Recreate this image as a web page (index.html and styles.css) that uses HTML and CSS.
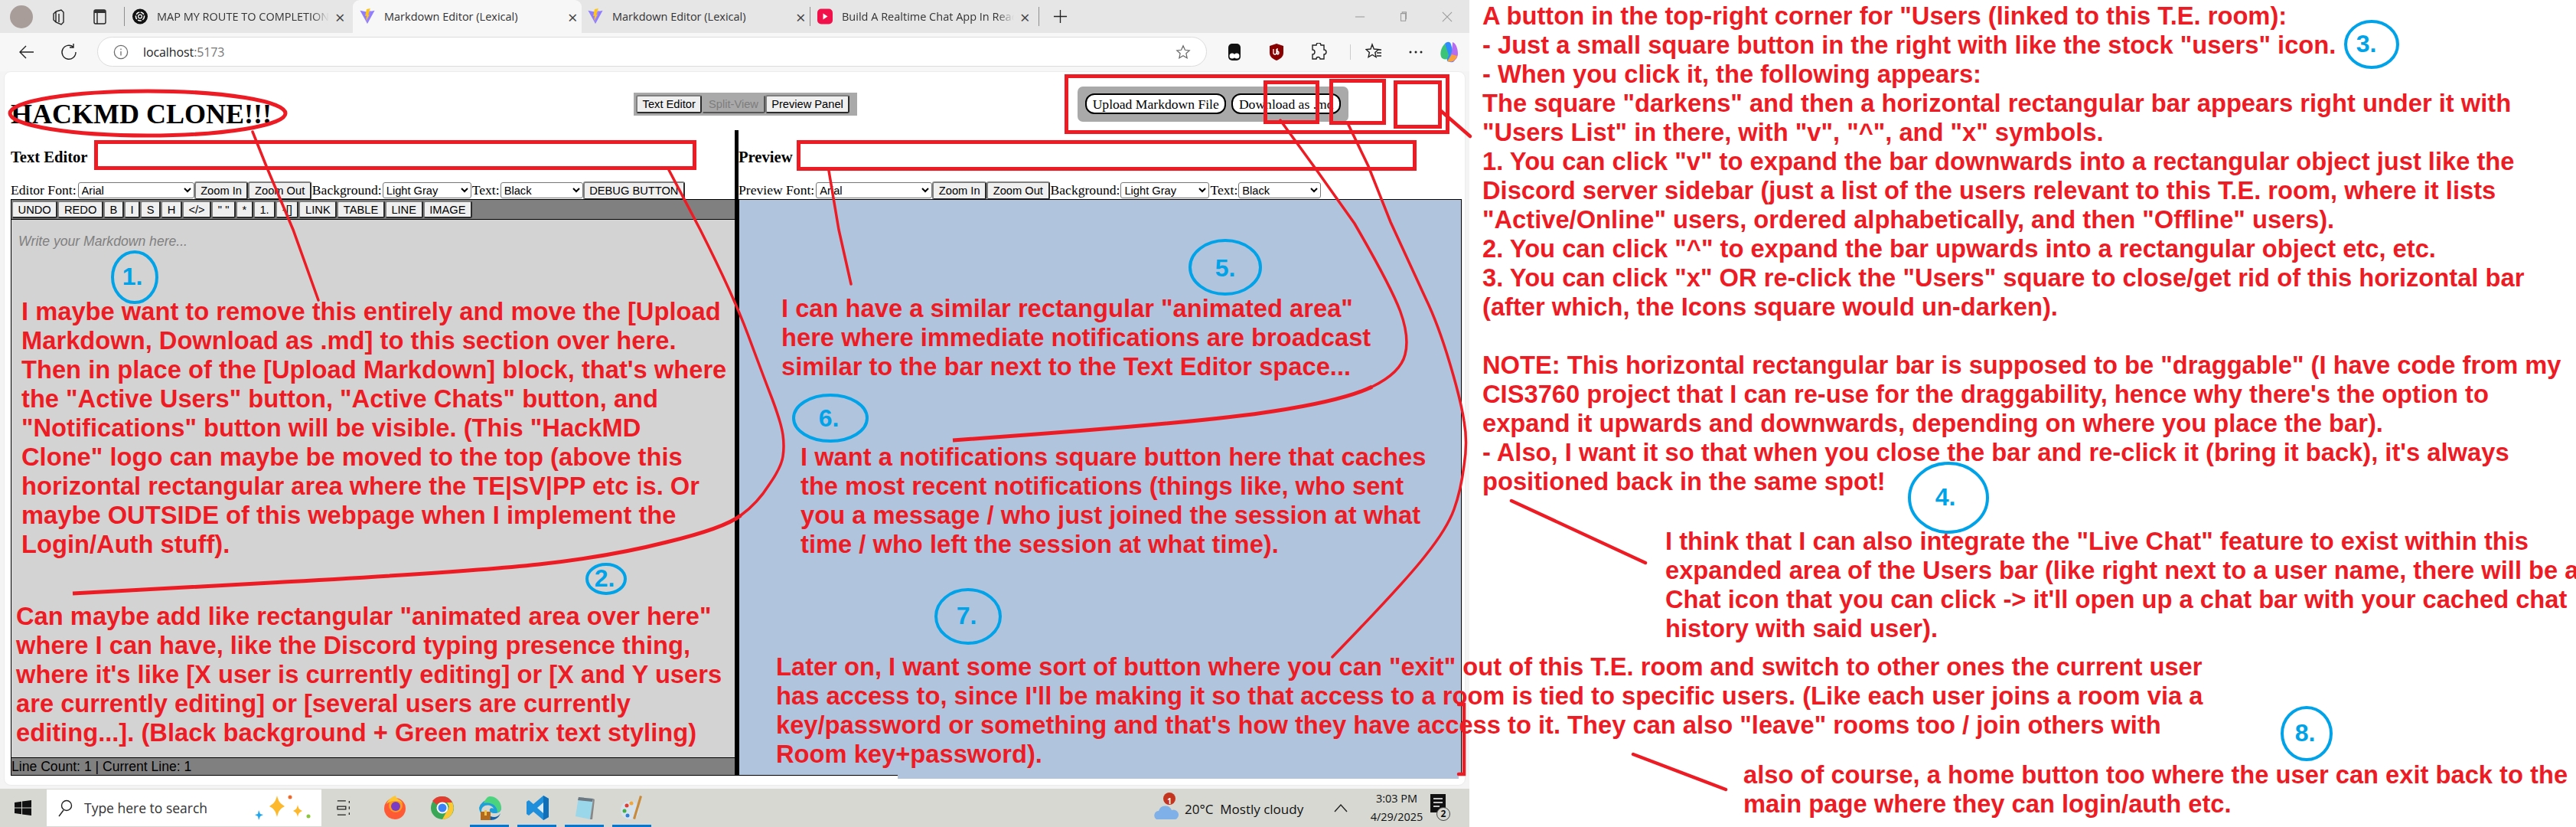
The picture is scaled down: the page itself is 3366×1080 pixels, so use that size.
FILE: index.html
```html
<!DOCTYPE html>
<html lang="en">
<head>
<meta charset="utf-8">
<title>Markdown Editor (Lexical)</title>
<link rel="stylesheet" href="styles.css">
</head>
<body>
<div class="screen">
  <div class="window">
    <div class="tabstrip">
      <span class="avatar"></span>
      <svg class="tool tool-first" viewBox="0 0 24 24"><path d="M8 5l7-2 3 3v13l-3 3-7-3-3-3V8zM8 5v14M12 8v11" class="ico"/></svg>
      <svg class="tool tool-second" viewBox="0 0 24 24"><rect x="5" y="3" width="15" height="18" rx="2" class="ico"/><path d="M5 3h15v4H5z" fill="#333"/><path d="M9 7v14" class="ico"/></svg>
      <span class="sep sep-a"></span>
      <div class="tab tab-one">
        <svg class="fav" viewBox="0 0 20 20"><circle cx="10" cy="10" r="10" fill="#111"/><circle cx="10" cy="10" r="5.5" fill="none" stroke="#fff" stroke-width="1.6" stroke-dasharray="5 1.5"/><circle cx="10" cy="10" r="2.4" fill="none" stroke="#fff" stroke-width="1.2"/></svg>
        <span class="tab-title fade">MAP MY ROUTE TO COMPLETION</span>
        <span class="tab-x">×</span>
      </div>
      <div class="tab tab-active">
        <svg class="fav" viewBox="0 0 20 22"><path d="M0 3l10 2 10-2-10 18z" fill="#8f7cff"/><path d="M10 5l5-2-6 18z" fill="#a78bfa"/><path d="M9 1l5-1-3 9 2-.5L8 17l1-7-2 .5z" fill="#ffc517"/></svg>
        <span class="tab-title">Markdown Editor (Lexical)</span>
        <span class="tab-x">×</span>
      </div>
      <div class="tab tab-three">
        <svg class="fav" viewBox="0 0 20 22"><path d="M0 3l10 2 10-2-10 18z" fill="#8f7cff"/><path d="M10 5l5-2-6 18z" fill="#a78bfa"/><path d="M9 1l5-1-3 9 2-.5L8 17l1-7-2 .5z" fill="#ffc517"/></svg>
        <span class="tab-title">Markdown Editor (Lexical)</span>
        <span class="tab-x">×</span>
      </div>
      <span class="sep"></span>
      <div class="tab tab-four">
        <svg class="fav" viewBox="0 0 20 20"><rect width="20" height="20" rx="5" fill="#f2104a"/><path d="M7.500 6l6 4-6 4z" fill="#fff"/></svg>
        <span class="tab-title fade">Build A Realtime Chat App In React</span>
        <span class="tab-x">×</span>
      </div>
      <span class="sep"></span>
      <svg class="plus" viewBox="0 0 20 20"><path d="M10 1v18M1 10h18" class="ico"/></svg>
      <div class="winctl">
        <svg viewBox="0 0 16 16"><path d="M1 8h14" class="ico-light"/></svg>
        <svg viewBox="0 0 16 16"><path d="M4 3h7v11H4zM6 3V1h6v10h-1" class="ico-light"/></svg>
        <svg viewBox="0 0 16 16"><path d="M1 1l14 14M15 1L1 15" class="ico-light"/></svg>
      </div>
    </div>
    <div class="toolbar">
      <svg class="nav nav-back" viewBox="0 0 22 22"><path d="M20 11H3M10 3l-8 8 8 8" class="ico"/></svg>
      <svg class="nav" viewBox="0 0 22 22"><path d="M17 4.500A9 9 0 1 0 20 11M17 0v5h-5" class="ico"/></svg>
      <div class="omnibox">
        <svg class="info" viewBox="0 0 22 22"><circle cx="11" cy="11" r="9.500" class="ico-soft"/><path d="M11 10v6M11 6v2" class="ico-soft"/></svg>
        <span class="url">localhost<span class="port">:5173</span></span>
        <svg class="star" viewBox="0 0 22 22"><path d="M11 2l2.700 6 6.300.7-4.700 4.300 1.300 6.500-5.600-3.300-5.600 3.300 1.300-6.500L2 8.700 8.300 8z" class="ico-soft"/></svg>
      </div>
      <div class="ext">
        <svg viewBox="0 0 22 24"><rect x="3" y="1" width="16" height="22" rx="5" fill="#111"/><circle cx="8" cy="17" r="3.500" fill="#fff"/><circle cx="14" cy="17" r="3.500" fill="#fff"/></svg>
        <svg viewBox="0 0 22 24"><path d="M11 1l9 3v9c0 5-4 8-9 10-5-2-9-5-9-10V4z" fill="#800"/><path d="M7 8v5a2 2 0 0 0 4 0V8M12 7v8M12 11a2 2 0 1 1 0 4" fill="none" stroke="#fff" stroke-width="1.300"/></svg>
        <svg viewBox="0 0 22 24"><path d="M8 3a3 3 0 0 1 6 0h4v6a3 3 0 0 1 0 6v6h-5a2.500 2.500 0 0 0-5 0H3v-6a3 3 0 0 0 0-6V3z" class="ico"/></svg>
        <span class="sep sep-short"></span>
        <svg viewBox="0 0 22 24"><path d="M9 2l2.300 6 6 .5-4.500 4 1.300 6-5-3-5 3 1.300-6L1 8.500 7 8zM15 13h6M15 17h6M16 9h5" class="ico"/></svg>
        <svg viewBox="0 0 22 24"><circle cx="4" cy="12" r="1.500" fill="#222"/><circle cx="11" cy="12" r="1.500" fill="#222"/><circle cx="18" cy="12" r="1.500" fill="#222"/></svg>
        <svg viewBox="0 0 28 30"><path d="M8 4c3-3 7-3 8 1l5 18c1 4-3 6-6 5l-4-1z" fill="#2f8cff"/><path d="M8 4C4 8 1 15 3 21c1 3 5 4 8 3l2-5z" fill="#39c477"/><path d="M18 2c4 1 7 8 7 15 0 5-3 9-8 11l-4-1 4-12z" fill="#b66cf0"/><path d="M11 27c6 2 11-1 13-7l-7-2z" fill="#f9a13a"/></svg>
      </div>
    </div>

    <main class="page">
      <header class="app-head">
        <h1 class="logo">HACKMD CLONE!!!</h1>
        <div class="view-toggle">
          <button class="btn" type="button">Text Editor</button>
          <button class="btn btn-off" type="button">Split-View</button>
          <button class="btn" type="button">Preview Panel</button>
        </div>
        <div class="file-actions">
          <button class="pill" type="button">Upload Markdown File</button>
          <button class="pill" type="button">Download as .md</button>
        </div>
      </header>

      <div class="panes">
        <section class="pane pane-editor">
          <h2 class="pane-title">Text Editor</h2>
          <div class="controls">
            <label class="ctl-label">Editor Font:</label>
            <select class="sel sel-font"><option>Arial</option></select>
            <button class="btn" type="button">Zoom In</button>
            <button class="btn" type="button">Zoom Out</button>
            <label class="ctl-label">Background:</label>
            <select class="sel sel-bg"><option>Light Gray</option></select>
            <label class="ctl-label">Text:</label>
            <select class="sel sel-text"><option>Black</option></select>
            <button class="btn" type="button">DEBUG BUTTON</button>
          </div>
          <div class="editor-box">
            <div class="md-tools">
              <button class="btn" type="button">UNDO</button>
              <button class="btn" type="button">REDO</button>
              <button class="btn" type="button">B</button>
              <button class="btn" type="button">I</button>
              <button class="btn" type="button">S</button>
              <button class="btn" type="button">H</button>
              <button class="btn" type="button">&lt;/&gt;</button>
              <button class="btn" type="button">" "</button>
              <button class="btn" type="button">*</button>
              <button class="btn" type="button">1.</button>
              <button class="btn" type="button">-[]</button>
              <button class="btn" type="button">LINK</button>
              <button class="btn" type="button">TABLE</button>
              <button class="btn" type="button">LINE</button>
              <button class="btn" type="button">IMAGE</button>
            </div>
            <div class="editor-area"><span class="placeholder">Write your Markdown here...</span></div>
            <div class="status">Line Count: 1 | Current Line: 1</div>
          </div>
        </section>
        <section class="pane pane-preview">
          <h2 class="pane-title">Preview</h2>
          <div class="controls">
            <label class="ctl-label">Preview Font:</label>
            <select class="sel sel-font"><option>Arial</option></select>
            <button class="btn" type="button">Zoom In</button>
            <button class="btn" type="button">Zoom Out</button>
            <label class="ctl-label">Background:</label>
            <select class="sel sel-bg"><option>Light Gray</option></select>
            <label class="ctl-label">Text:</label>
            <select class="sel sel-text"><option>Black</option></select>
          </div>
          <div class="preview-box"></div>
        </section>
      </div>
    </main>

    <footer class="taskbar">
      <svg class="winlogo" viewBox="0 0 22 20"><path d="M0 3l9-1.300V9.500H0zM10 1.500L22 0v9.500H10zM0 10.500h9v7.800L0 17zM10 10.500h12V20l-12-1.600z" fill="#111"/></svg>
      <div class="search">
        <svg class="mag" viewBox="0 0 20 24"><circle cx="12" cy="9" r="6.500" class="ico"/><path d="M8 15l-6 8" class="ico"/></svg>
        <span class="search-text">Type here to search</span>
        <svg class="sparkle" viewBox="0 0 76 34"><path d="M30 1c2 8 4 10 10 14-6 3-8 6-10 14-2-8-4-11-10-14 6-4 8-6 10-14z" fill="#fdb92d"/><path d="M57 13c1 5 2 6 6 8-4 2-5 3-6 8-1-5-2-6-6-8 4-2 5-3 6-8z" fill="#fdb92d"/><circle cx="47" cy="3" r="2.500" fill="#f2682a"/><circle cx="71" cy="28" r="2.500" fill="#8cc63f"/><path d="M6 20l2 5 4 1-4 2-2 5-1-5-4-2 4-1z" fill="#1ea7f0"/></svg>
      </div>
      <svg class="taskview" viewBox="0 0 22 24"><path d="M1 2h12M1 10h12v4H1zM1 22h12M18 2v3M18 10v4M18 19v3" class="ico"/></svg>
      <div class="apps">
        <span class="app">
          <svg viewBox="0 0 32 34"><circle cx="16" cy="18" r="14" fill="#ff5a36"/><circle cx="17" cy="14" r="9" fill="#fc9b1f"/><circle cx="17" cy="15" r="6" fill="#7b3bc4"/><path d="M5 12c2-6 8-10 12-11 0 5 6 4 9 10-6-5-15-4-21 1z" fill="#ffc530"/></svg>
        </span>
        <span class="app">
          <svg viewBox="0 0 32 34"><circle cx="16" cy="17" r="15" fill="#3aa757"/><path d="M16 2a15 15 0 0 1 13 8H16a7 7 0 0 0-7 3L3 8a15 15 0 0 1 13-6z" fill="#e23c30"/><path d="M29 10a15 15 0 0 1-13 22l6-11a7 7 0 0 0 0-11z" fill="#fcc934"/><circle cx="16" cy="17" r="7.500" fill="#fff"/><circle cx="16" cy="17" r="5.500" fill="#3b82f6"/></svg>
        </span>
        <span class="app app-on">
          <svg viewBox="0 0 32 34"><path d="M2 17a15 15 0 0 1 29 0c0 5-4 7-8 7-5 0-8-2-7-5 1-2 3-2 5-1-2-5-10-6-14-2-3 3-2 8 0 11A15 15 0 0 1 2 17z" fill="#1f9fd8"/><path d="M16 2a15 15 0 0 1 15 15c0 3-2 5-5 6 0-8-7-14-18-12 2-5 5-9 8-9z" fill="#4cd37e"/><rect x="4" y="22" width="13" height="11" fill="#b26a1f"/><rect x="9" y="20" width="3" height="7" fill="#f0c24b"/><path d="M17 28c5 2 10 1 13-4-2 6-7 9-13 9z" fill="#1560a8"/></svg>
        </span>
        <span class="app app-on">
          <svg viewBox="0 0 32 34"><path d="M24 1l7 4v24l-7 4-13-11-6 5-3-2V9l3-2 6 5z" fill="#1f8fdc"/><path d="M24 1l7 4v24l-7 4z" fill="#0f6fb8"/><path d="M24 10l-8 7 8 7z" fill="#d9ecf8"/></svg>
        </span>
        <span class="app app-on">
          <svg viewBox="0 0 32 34"><path d="M8 3l19 2-4 27L4 28z" fill="#9ad7ea"/><path d="M8 3l19 2-1 4L7 7z" fill="#6d7780"/><path d="M23 32l4-27 2 1-3 26z" fill="#888"/></svg>
        </span>
        <span class="app app-on">
          <svg viewBox="0 0 32 34"><ellipse cx="13" cy="20" rx="12" ry="12" fill="#d7e3ec"/><circle cx="9" cy="14" r="2.500" fill="#e23c30"/><circle cx="15" cy="11" r="2.500" fill="#f7a531"/><circle cx="6" cy="21" r="2.500" fill="#3fae49"/><circle cx="10" cy="27" r="2.500" fill="#2f7fd8"/><path d="M26 1l3 1-9 30-3-1z" fill="#c98a3a"/></svg>
        </span>
      </div>
      <div class="tray">
        <span class="weather">
          <svg class="cloud" viewBox="0 0 32 40"><path d="M3 36a6 6 0 0 1 3-11 9 9 0 0 1 17-1 6 6 0 0 1 5 12z" fill="#7fb0e8"/><circle cx="20" cy="9" r="8" fill="#c4351f"/></svg>
          <span class="badge-one">1</span>
          <span class="weather-text">20°C&nbsp; Mostly cloudy</span>
        </span>
        <svg class="caret" viewBox="0 0 18 12"><path d="M1 11l8-9 8 9" class="ico"/></svg>
        <span class="clock"><span>3:03 PM</span><span>4/29/2025</span></span>
        <span class="notif">
          <svg viewBox="0 0 20 26"><rect width="20" height="24" fill="#111"/><path d="M4 6h12M4 11h12M4 16h8" stroke="#fff" stroke-width="1.500"/></svg>
          <span class="notif-count">2</span>
        </span>
      </div>
    </footer>
  </div>

  <aside class="side-notes">
<div class="note side-a">A button in the top-right corner for "Users (linked to this T.E. room):
- Just a small square button in the right with like the stock "users" icon.
- When you click it, the following appears:
The square "darkens" and then a horizontal rectangular bar appears right under it with
"Users List" in there, with "v", "^", and "x" symbols.
1. You can click "v" to expand the bar downwards into a rectangular object just like the
Discord server sidebar (just a list of the users relevant to this T.E. room, where it lists
"Active/Online" users, ordered alphabetically, and then "Offline" users).
2. You can click "^" to expand the bar upwards into a rectangular object etc, etc.
3. You can click "x" OR re-click the "Users" square to close/get rid of this horizontal bar
(after which, the Icons square would un-darken).

NOTE: This horizontal rectangular bar is supposed to be "draggable" (I have code from my
CIS3760 project that I can re-use for the draggability, hence why there's the option to
expand it upwards and downwards, depending on where you place the bar).
- Also, I want it so that when you close the bar and re-click it (bring it back), it's always
positioned back in the same spot!</div>
<div class="note side-b">I think that I can also integrate the "Live Chat" feature to exist within this
expanded area of the Users bar (like right next to a user name, there will be a
Chat icon that you can click -&gt; it'll open up a chat bar with your cached chat
history with said user).</div>
<div class="note side-c">also of course, a home button too where the user can exit back to the
main page where they can login/auth etc.</div>
  </aside>
</div>

<div class="patch"></div>

<div class="note over-1">I maybe want to remove this entirely and move the [Upload
Markdown, Download as .md] to this section over here.
Then in place of the [Upload Markdown] block, that's where
the "Active Users" button, "Active Chats" button, and
"Notifications" button will be visible. (This "HackMD
Clone" logo can maybe be moved to the top (above this
horizontal rectangular area where the TE|SV|PP etc is. Or
maybe OUTSIDE of this webpage when I implement the
Login/Auth stuff).</div>
<div class="note over-2">Can maybe add like rectangular "animated area over here"
where I can have, like the Discord typing presence thing,
where it's like [X user is currently editing] or [X and Y users
are currently editing] or [several users are currently
editing...]. (Black background + Green matrix text styling)</div>
<div class="note over-5">I can have a similar rectangular "animated area"
here where immediate notifications are broadcast
similar to the bar next to the Text Editor space...</div>
<div class="note over-6">I want a notifications square button here that caches
the most recent notifications (things like, who sent
you a message / who just joined the session at what
time / who left the session at what time).</div>
<div class="note over-7">Later on, I want some sort of button where you can "exit" out of this T.E. room and switch to other ones the current user
has access to, since I'll be making it so that access to a room is tied to specific users. (Like each user joins a room via a
key/password or something and that's how they have access to it. They can also "leave" rooms too / join others with
Room key+password).</div>

<svg class="marks" viewBox="0 0 3366 1080" aria-hidden="true">
  <g class="red">
    <ellipse cx="193" cy="148" rx="180" ry="29" class="w5"/>
    <rect x="125.500" y="185.500" width="782" height="34" class="w5"/>
    <rect x="1043.500" y="185.500" width="805" height="35" class="w5"/>
    <rect x="1393.500" y="99.500" width="498" height="73" class="w5"/>
    <rect x="1653.500" y="107.500" width="68" height="52" class="w5"/>
    <rect x="1739.500" y="105.500" width="69" height="55" class="w5"/>
    <rect x="1823.500" y="107.500" width="58" height="58" class="w5"/>
    <path d="M330 172L348 217L383 300L416 392" class="w3"/>
    <path d="M874 222L915 300Q958 385 977.500 437.500Q997 490 1009 521Q1021 553 1023 568Q1025 583 1023 596Q1021 610 1005 633Q990 657 968 673" class="w3"/>
    <path d="M968 673Q946 690 871 708Q796 727 704 737Q612 747 354 761L95 775" class="w5"/>
    <path d="M1083 223L1096 300L1112 371" class="w3"/>
    <path d="M1673 157L1721 223L1770 292Q1817 373 1829.500 406Q1842 440 1836 463Q1830 487 1793 505" class="w3"/>
    <path d="M1793 505Q1756 523 1664 537Q1572 552 1245 575" class="w5"/>
    <path d="M1762 163L1788 217L1817 290Q1848 357 1863 390Q1879 423 1894 473Q1909 523 1913 550Q1918 577 1913 608Q1909 640 1900 665Q1891 690 1863 725Q1836 760 1741 858" class="w3"/>
    <path d="M1883 145L1921 178" class="w4"/>
    <path d="M1975 654L2150 735" class="w4"/>
    <path d="M2134 985L2255 1031" class="w4"/>
    <path d="M1906 920H1913V1011H1906" class="w4"/>
  </g>
  <g class="blue">
    <ellipse cx="176" cy="362" rx="29" ry="33"/>
    <ellipse cx="792" cy="756" rx="25" ry="19"/>
    <ellipse cx="3099" cy="58" rx="34" ry="30"/>
    <ellipse cx="2546" cy="650" rx="51" ry="45"/>
    <ellipse cx="1601" cy="349" rx="46" ry="35"/>
    <ellipse cx="1085" cy="546" rx="48" ry="30"/>
    <ellipse cx="1265" cy="805" rx="42" ry="35"/>
    <ellipse cx="3014" cy="958" rx="32" ry="34"/>
  </g>
  <g class="blue-num">
    <text x="173" y="372">1.</text>
    <text x="790" y="766">2.</text>
    <text x="3092" y="68">3.</text>
    <text x="2542" y="660">4.</text>
    <text x="1601" y="361">5.</text>
    <text x="1083" y="557">6.</text>
    <text x="1263" y="815">7.</text>
    <text x="3012" y="968">8.</text>
  </g>
</svg>
</body>
</html>
```
FILE: styles.css
```css
html, body { margin: 0; padding: 0; }
body {
  width: 3366px;
  height: 1080px;
  overflow: hidden;
  position: relative;
  background: #fff;
  font-family: "Liberation Serif", "Times New Roman", serif;
}
.screen { display: flex; width: 3366px; height: 1080px; }
.window {
  width: 1920px;
  flex: none;
  display: flex;
  flex-direction: column;
  background: #f4f4f4;
}

/* icons */
.ico, .ico-light, .ico-soft { fill: none; stroke: #222; stroke-width: 1.4; }
.ico-light { stroke: #9a9a9a; stroke-width: 1.2; }
.ico-soft { stroke: #6b6b6b; }

/* tab strip */
.tabstrip {
  height: 43px;
  flex: none;
  display: flex;
  align-items: center;
  background: #e6e6e6;
  font-family: "Open Sans", "Noto Sans", sans-serif;
}
.avatar {
  width: 30px;
  height: 30px;
  margin-left: 13px;
  border-radius: 50%;
  background: #a89d99;
  flex: none;
}
.tool { width: 24px; height: 24px; flex: none; }
.tool-first { margin-left: 22px; }
.tool-second { margin-left: 29px; }
.sep { width: 1px; height: 25px; background: #8e8e8e; flex: none; }
.sep-a { margin-left: 20px; }
.tab {
  display: flex;
  align-items: center;
  height: 43px;
  flex: none;
  box-sizing: border-box;
  padding-left: 10px;
  font-size: 14.5px;
  color: #333;
}
.tab-one { width: 298px; }
.tab-active { width: 299px; padding-left: 9px; background: #f7f7f7; border-radius: 9px 9px 0 0; }
.tab-three { width: 298px; padding-left: 8px; }
.tab-four { width: 298px; padding-left: 9px; }
.fav { width: 20px; height: 21px; flex: none; margin-right: 12px; }
.tab-title {
  width: 232px;
  white-space: nowrap;
  overflow: hidden;
  flex: none;
}
.tab-one .tab-title, .tab-four .tab-title { width: 225px; }
.tab-active .tab-title, .tab-three .tab-title { width: 232px; }
.fade { -webkit-mask-image: linear-gradient(90deg, #000 90%, transparent); mask-image: linear-gradient(90deg, #000 90%, transparent); }
.tab-x { font-size: 22px; line-height: 22px; color: #444; margin-left: 8px; }
.plus { width: 19px; height: 19px; margin-left: 18px; flex: none; }
.winctl {
  display: flex;
  gap: 43px;
  margin-left: 375px;
  align-items: center;
}
.winctl svg { width: 14px; height: 14px; }

/* toolbar */
.toolbar {
  height: 50px;
  flex: none;
  display: flex;
  align-items: center;
  background: #f7f7f7;
  box-sizing: border-box;
  padding-left: 24px;
  padding-bottom: 1px;
}
.nav { width: 22px; height: 22px; flex: none; margin-right: 33px; }
.nav-back { margin-right: 33px; }
.nav:nth-child(2) { margin-right: 26px; }
.omnibox {
  width: 1450px;
  height: 39px;
  flex: none;
  box-sizing: border-box;
  display: flex;
  align-items: center;
  background: #fff;
  border: 1.5px solid #dcdcdc;
  border-radius: 20px;
  padding-left: 20px;
  font-family: "Open Sans", "Noto Sans", sans-serif;
  font-size: 16px;
}
.info { width: 20px; height: 20px; flex: none; }
.url { margin-left: 19px; color: #222; letter-spacing: -.1px; }
.port { color: #777; }
.star { width: 20px; height: 22px; margin-left: auto; margin-right: 20px; flex: none; }
.ext {
  display: flex;
  align-items: center;
  gap: 0;
  margin-left: 25px;
  width: 315px;
  justify-content: flex-start;
}
.ext svg { width: 22px; height: 24px; flex: none; margin-right: 33px; }
.ext svg:last-child { width: 28px; height: 30px; margin-right: 0; margin-left: -14px; }
.sep-short { height: 20px; margin: 0 19px 0 -3px; background: #ccc; }

/* page */
.page {
  height: 933px;
  flex: none;
  box-sizing: border-box;
  margin: 0 5px 0 5px;
  background: #fff;
  border: 1px solid #ececec;
  border-radius: 9px;
  padding-left: 8px;
  display: flex;
  flex-direction: column;
}
.app-head {
  height: 76px;
  flex: none;
  display: grid;
  grid-template-columns: 814px 580px auto;
  align-items: start;
}
.logo {
  margin: 35px 0 0;
  font-size: 36px;
  font-weight: bold;
  line-height: 40px;
  white-space: nowrap;
}
.view-toggle {
  margin-top: 27px;
  height: 30px;
  width: 292px;
  box-sizing: border-box;
  padding: 3px;
  background: #a9a9a9;
  display: flex;
}
.file-actions {
  margin-top: 19px;
  width: 354px;
  height: 46px;
  box-sizing: border-box;
  padding: 9px 10px;
  background: #a9a9a9;
  border-radius: 7px;
  display: flex;
  gap: 7px;
}
.pill {
  height: 27px;
  padding: 0 11px;
  background: #fff;
  border: 2px solid #000;
  border-radius: 12px;
  font-family: inherit;
  font-size: 17.6px;
  line-height: 20px;
  color: #000;
  white-space: nowrap;
}
.pill + .pill { width: 143px; padding: 0; }
.pill:first-child { width: 185px; padding: 0; }

.btn {
  height: 24px;
  box-sizing: border-box;
  padding: 0 6.6px;
  border: 2px outset #808080;
  border-radius: 3px;
  background: #efefef;
  font-family: "Liberation Sans", Arial, sans-serif;
  font-size: 14.67px;
  color: #000;
  white-space: nowrap;
  flex: none;
}
.btn-off {
  background: #a9a9a9;
  border-color: #a9a9a9;
  color: #7d7d7d;
}

/* panes */
.panes { display: flex; flex: 1; min-height: 0; align-items: flex-start; }
.pane { flex: none; display: flex; flex-direction: column; }
.pane-editor { width: 946px; }
.pane-preview {
  width: 945px;
  border-left: 5px solid #000;
}
.pane-title {
  margin: 0;
  height: 67px;
  box-sizing: border-box;
  padding-top: 23px;
  font-size: 20.6px;
  line-height: 24px;
  font-weight: bold;
  flex: none;
}
.controls {
  height: 23px;
  flex: none;
  display: flex;
  align-items: center;
  font-size: 17.6px;
  white-space: nowrap;
}
.ctl-label { margin: 0 1px; flex: none; }
.ctl-label:first-child { margin-left: 0; margin-right: 2px; }
.sel {
  height: 21px;
  box-sizing: border-box;
  border: 1px solid #767676;
  border-radius: 3px;
  background: #fff;
  font-family: "Liberation Sans", Arial, sans-serif;
  font-size: 14.67px;
  color: #000;
  flex: none;
}
.sel-font { width: 152px; }
.sel-bg { width: 116px; }
.sel-text { width: 108px; }
.editor-box, .preview-box {
  flex: none;
  height: 753px;
  box-sizing: border-box;
  border: 1px solid #000;
}
.editor-box {
  width: 946px;
  display: flex;
  flex-direction: column;
  border-right: none;
}
.preview-box { width: 945px; background: #b0c4de; }
.md-tools {
  height: 24px;
  flex: none;
  display: flex;
  background: #808080;
  border-bottom: 1px solid #000;
  padding-top: 1px;
  box-sizing: content-box;
}
.md-tools .btn { height: 23px; }
.editor-area {
  flex: 1;
  background: #d3d3d3;
  padding: 18px 9px;
  font-family: "Liberation Sans", Arial, sans-serif;
  font-size: 17.6px;
}
.placeholder { color: #808080; font-style: italic; }
.status {
  height: 22px;
  flex: none;
  background: #808080;
  border-top: 1px solid #000;
  font-family: "Liberation Sans", Arial, sans-serif;
  font-size: 17.6px;
  line-height: 22px;
  color: #000;
  white-space: nowrap;
}

/* taskbar */
.taskbar {
  position: relative;
  margin-top: 4px;
  height: 50px;
  flex: none;
  display: flex;
  align-items: center;
  background: #d6d8d1;
  font-family: "Open Sans", "Noto Sans", sans-serif;
  color: #111;
}
.winlogo { width: 22px; height: 20px; margin-left: 19px; flex: none; }
.search {
  margin-left: 20px;
  width: 359px;
  height: 48px;
  flex: none;
  display: flex;
  align-items: center;
  background: #fff;
  box-sizing: border-box;
  padding-left: 14px;
}
.mag { width: 20px; height: 24px; flex: none; }
.search-text { margin-left: 15px; font-size: 17.5px; color: #333; white-space: nowrap; }
.sparkle { width: 76px; height: 34px; margin-left: auto; margin-right: 12px; flex: none; }
.taskview { width: 20px; height: 24px; margin-left: 20px; flex: none; }
.apps { display: flex; margin-left: 25px; align-items: stretch; height: 50px; }
.app {
  width: 62px;
  box-sizing: border-box;
  display: flex;
  align-items: center;
  justify-content: center;
  padding-top: 0;
  flex: none;
  position: relative;
}
.app svg { width: 32px; height: 34px; }
.app-on::after {
  content: "";
  position: absolute;
  left: 5px;
  right: 6px;
  bottom: 0;
  height: 3px;
  background: #0078d4;
}
.tray {
  position: absolute;
  right: 0;
  top: 0;
  height: 50px;
  width: 405px;
  display: flex;
  align-items: center;
  font-size: 15.5px;
}
.weather { display: flex; align-items: center; position: relative; margin-left: -7px; padding-top: 3px; }
.cloud { width: 32px; height: 40px; margin-right: 8px; margin-top: -5px; }
.badge-one {
  position: absolute;
  left: 15px;
  top: 3px;
  width: 10px;
  text-align: center;
  font-size: 10px;
  font-weight: bold;
  color: #fff;
  line-height: 14px;
}
.weather-text { white-space: nowrap; font-size: 17px; width: 170px; }
.caret { width: 18px; height: 12px; margin-left: 25px; flex: none; }
.clock {
  display: flex;
  flex-direction: column;
  align-items: center;
  width: 80px;
  margin-left: 24px;
  font-size: 14.5px;
  line-height: 24px;
}
.notif { position: relative; width: 24px; height: 40px; margin-left: 4px; padding-top: 4px; }
.notif svg { width: 20px; height: 26px; display: block; }
.notif-count {
  position: absolute;
  left: 8px;
  top: 21px;
  width: 18px;
  height: 18px;
  box-sizing: border-box;
  border: 1.5px solid #444;
  border-radius: 50%;
  background: #d6d8d1;
  font-size: 12px;
  font-weight: bold;
  line-height: 15px;
  text-align: center;
}

/* annotations */
.note {
  font-family: "Liberation Sans", Arial, sans-serif;
  font-weight: bold;
  font-size: 32.7px;
  line-height: 38px;
  color: #ed1c24;
  white-space: pre;
}
.side-notes { width: 1446px; flex: none; padding-top: 2px; box-sizing: border-box; }
.side-a { margin-left: 17px; }
.side-b { margin: 40px 0 0 256px; }
.side-c { margin: 153px 0 0 358px; }
.over-1, .over-2, .over-5, .over-6, .over-7 { position: absolute; z-index: 2; }
.over-1 { left: 28px; top: 388px; }
.over-2 { left: 21px; top: 786px; }
.over-5 { left: 1021px; top: 384px; }
.over-6 { left: 1046px; top: 578px; }
.over-7 { left: 1014px; top: 852px; }
.patch {
  position: absolute;
  left: 1173px;
  top: 1010px;
  width: 733px;
  height: 7px;
  background: #b0c4de;
}
.marks {
  position: absolute;
  left: 0;
  top: 0;
  width: 3366px;
  height: 1080px;
  z-index: 3;
  pointer-events: none;
}
.red * { fill: none; stroke: #ed1c24; stroke-linecap: round; }
.red .w3 { stroke-width: 3.5; }
.red .w4 { stroke-width: 4.5; }
.red .w5 { stroke-width: 5; stroke-linecap: butt; }
.blue ellipse { fill: none; stroke: #00a2e8; stroke-width: 4; }
.blue-num text {
  fill: #00a2e8;
  font-family: "Liberation Sans", Arial, sans-serif;
  font-weight: bold;
  font-size: 32px;
  text-anchor: middle;
}
```
